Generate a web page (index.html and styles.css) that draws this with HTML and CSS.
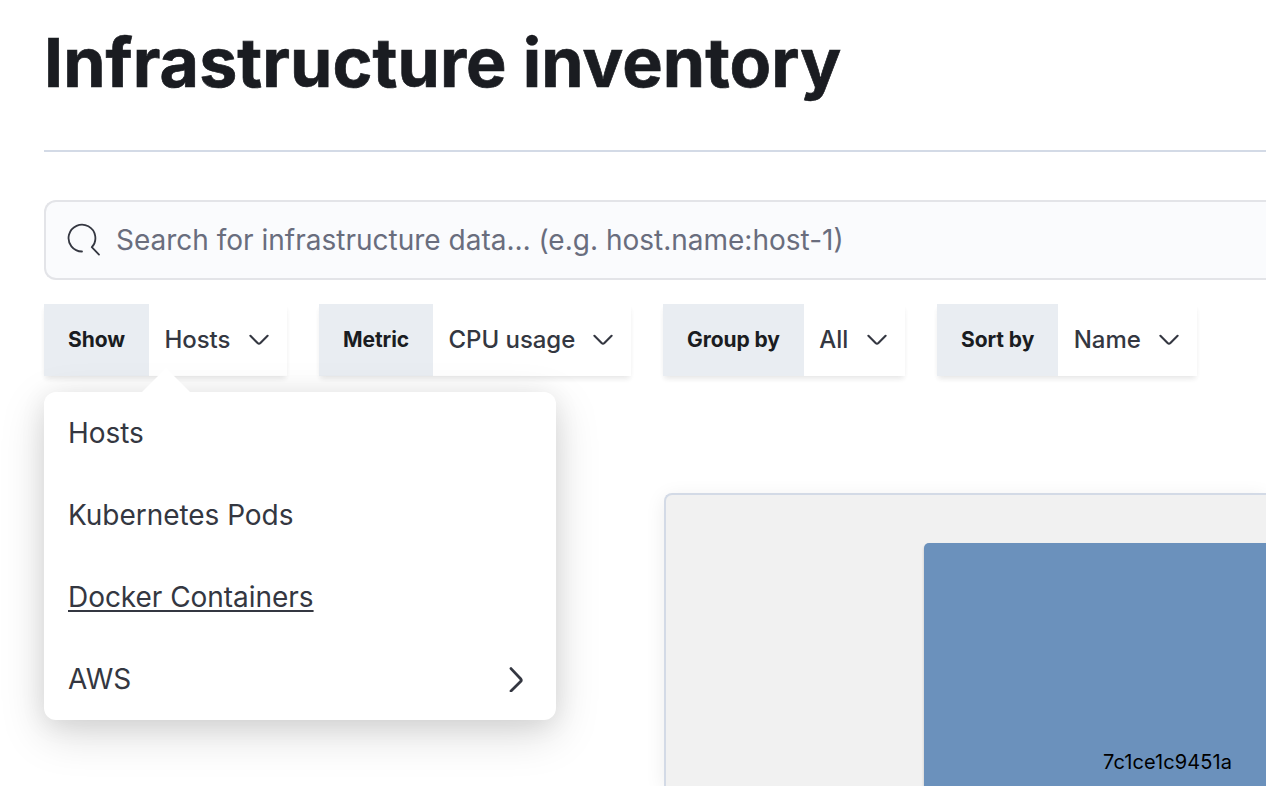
FILE: index.html
```html
<!DOCTYPE html>
<html lang="en">
<head>
<meta charset="utf-8">
<title>Infrastructure inventory</title>
<link rel="stylesheet" href="styles.css">
</head>
<body>
<main class="page">
  <h1 class="title">Infrastructure inventory</h1>
  <div class="search">
    <svg class="search-icon" width="34" height="34" viewBox="0 0 34 34" fill="none" stroke="#343741" stroke-width="1.8" stroke-linecap="round" stroke-linejoin="round"><path d="M15 28.5A13.4 13.4 0 1 1 24.8 24.2L32 31.6"/></svg>
    <span class="search-text">Search for infrastructure data… (e.g. host.name:host-1)</span>
  </div>
  <div class="filters">
    <div class="filter filter-show"><span class="label">Show</span><span class="value">Hosts</span><svg class="chevron" width="20" height="12" viewBox="0 0 20 12"><path d="M1.4 1.8L8.6 9Q10 10.2 11.4 9L18.6 1.8"/></svg>
      <div class="menu">
        <a class="item">Hosts</a>
        <a class="item">Kubernetes Pods</a>
        <a class="item item-active">Docker Containers</a>
        <a class="item">AWS<svg class="arrow" width="16" height="26" viewBox="0 0 16 26"><path d="M3 2.6L12.6 12.8Q13.9 14.2 12.6 15.6L3 25"/></svg></a>
      </div>
    </div>
    <div class="filter filter-metric"><span class="label">Metric</span><span class="value">CPU usage</span><svg class="chevron" width="20" height="12" viewBox="0 0 20 12"><path d="M1.4 1.8L8.6 9Q10 10.2 11.4 9L18.6 1.8"/></svg></div>
    <div class="filter filter-group"><span class="label">Group by</span><span class="value">All</span><svg class="chevron" width="20" height="12" viewBox="0 0 20 12"><path d="M1.4 1.8L8.6 9Q10 10.2 11.4 9L18.6 1.8"/></svg></div>
    <div class="filter filter-sort"><span class="label">Sort by</span><span class="value">Name</span><svg class="chevron" width="20" height="12" viewBox="0 0 20 12"><path d="M1.4 1.8L8.6 9Q10 10.2 11.4 9L18.6 1.8"/></svg></div>
  </div>
  <section class="map">
    <div class="node"><span class="node-name">7c1ce1c9451a</span></div>
  </section>
</main>
</body>
</html>
```
FILE: styles.css
```css
* { box-sizing: border-box; }
body { margin: 0; width: 1266px; height: 786px; overflow: hidden; background: #fff; font-family: Inter, sans-serif; font-optical-sizing: none; color: #343741; }
.page { height: 786px; padding-left: 44px; overflow: hidden; }
.title { margin: 0; height: 152px; padding-top: 22px; border-bottom: 2px solid #d3dae6; color: #1a1c21; font-size: 68px; line-height: 80px; font-weight: 700; letter-spacing: .08px; -webkit-text-stroke: .7px #1a1c21; white-space: nowrap; }
.search { display: flex; align-items: center; height: 80px; margin-top: 48px; padding-left: 21px; border: 2px solid #e3e4e8; border-right: 0; border-radius: 12px 0 0 12px; background: #fafbfd; }
.search-text { margin-left: 15px; font-size: 28px; color: #696d7d; white-space: nowrap; }
.filters { display: flex; gap: 32px; margin-top: 24px; height: 72px; }
.filter { position: relative; display: flex; align-items: center; height: 72px; box-shadow: 0 4px 5px -1px rgba(0,0,0,.07), 0 3px 8px -2px rgba(0,0,0,.04); white-space: nowrap; }
.filter-show { z-index: 2; width: 243px; }
.filter-metric { width: 312px; }
.filter-group { width: 242px; }
.filter-sort { width: 260px; }
.label { display: flex; align-items: center; height: 72px; padding: 0 24px 1px; background: #e9edf2; color: #1a1c21; font-size: 21px; letter-spacing: -.08px; font-weight: 700; }
.value { margin-left: 15.5px; padding-bottom: 1px; font-size: 24px; font-weight: 500; letter-spacing: -.05px; }
.chevron { margin-left: auto; margin-right: 18px; fill: none; stroke: #343741; stroke-width: 2.1; stroke-linecap: round; stroke-linejoin: round; }
.menu { position: absolute; z-index: 2; left: 0; top: 88px; width: 512px; height: 328px; border-radius: 12px; background: #fff; box-shadow: 0 14px 46px rgba(0,0,0,.15), 0 4px 26px rgba(0,0,0,.08); }
.menu::before { content: ""; position: absolute; left: 98px; top: -24px; width: 48px; height: 24px; background: #fff; clip-path: polygon(50% 0, 100% 100%, 0 100%); }
.item { display: flex; align-items: center; justify-content: space-between; height: 82px; padding: 0 32px 0 24px; font-size: 28px; letter-spacing: -.04px; }
.item-active { text-decoration: underline; text-decoration-thickness: 2px; text-underline-offset: 3px; }
.arrow { fill: none; stroke: #343741; stroke-width: 2.8; stroke-linecap: round; stroke-linejoin: round; }
.map { margin: 117px 0 0 620px; height: 293px; padding: 48px 0 0 258px; border: 2px solid #d3dae6; border-right: 0; border-bottom: 0; border-radius: 8px 0 0 0; background: #f1f1f1; box-shadow: 0 4px 20px rgba(0,0,0,.08); }
.node { display: flex; align-items: flex-end; justify-content: flex-end; height: 243px; padding: 0 34px 12px 0; border-radius: 5px 0 0 0; background: #6b91bc; color: #000; box-shadow: 0 2px 3px rgba(0,0,0,.2); }
.node-name { font-size: 20px; line-height: 24px; letter-spacing: .08px; }
```
